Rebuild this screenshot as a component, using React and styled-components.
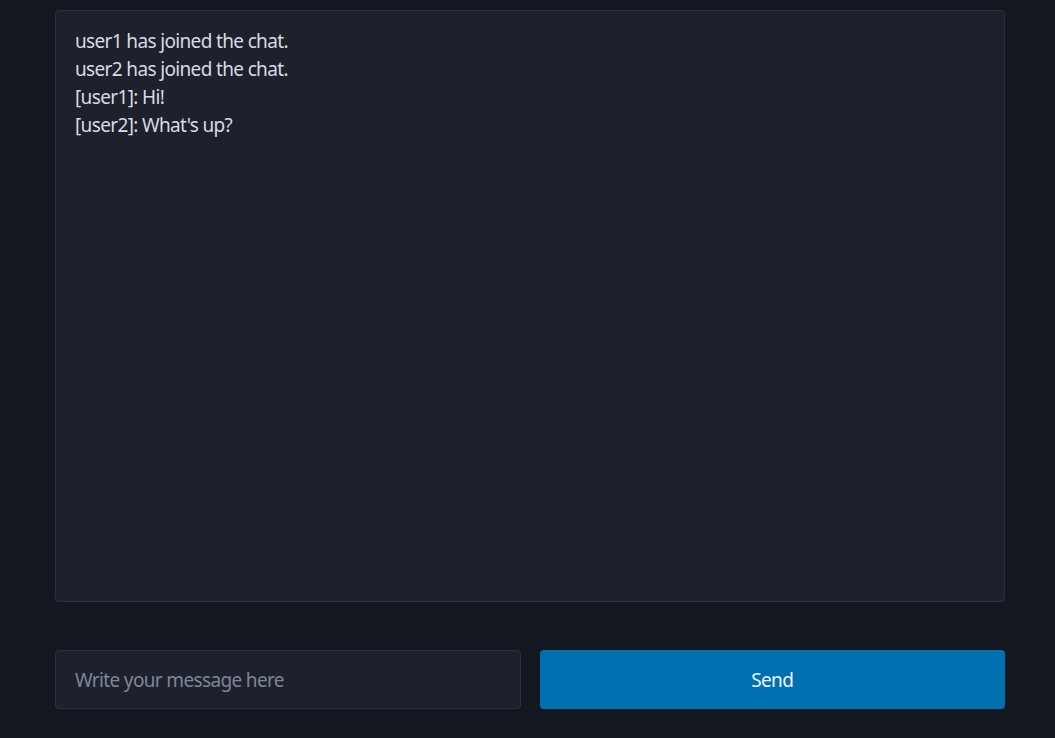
import React from "react";
import styled, { createGlobalStyle } from "styled-components";

const Global = createGlobalStyle`
  html, body { margin: 0; padding: 0; background: #13171f; }
  body { font-family: "Noto Sans", "Open Sans", sans-serif; }
  * { box-sizing: border-box; }
`;

const Page = styled.div`
  min-height: 738px;
  padding: 10px 50px 0 55px;
  display: flex;
  flex-direction: column;
`;

const ChatLog = styled.div`
  height: 592px;
  background: #1e212b;
  border: 1px solid #2b303b;
  border-radius: 4px;
  padding: 16px 19px;
  color: #d6dbe3;
  font-size: 19px;
  letter-spacing: -0.65px;
  line-height: 28px;
`;

const Line = styled.div``;

const Form = styled.form`
  margin-top: 48px;
  display: grid;
  grid-template-columns: 1fr 1fr;
  gap: 19px;
`;

const Input = styled.input`
  height: 59px;
  background: #1e212b;
  border: 1px solid #2b303b;
  border-radius: 4px;
  padding: 0 19px;
  color: #d6dbe3;
  font-family: inherit;
  font-size: 19px;
  letter-spacing: -0.65px;
  outline: none;
  &::placeholder { color: #7b879b; }
`;

const SendButton = styled.button`
  height: 59px;
  background: #0170b0;
  border: none;
  border-radius: 4px;
  color: #eef4fa;
  font-family: inherit;
  font-size: 19px;
  letter-spacing: -0.65px;
  cursor: pointer;
`;

const messages = [
  "user1 has joined the chat.",
  "user2 has joined the chat.",
  "[user1]: Hi!",
  "[user2]: What's up?",
];

export default function App() {
  return (
    <>
      <Global />
      <Page>
        <ChatLog>
          {messages.map((m, i) => (
            <Line key={i}>{m}</Line>
          ))}
        </ChatLog>
        <Form onSubmit={(e) => e.preventDefault()}>
          <Input placeholder="Write your message here" />
          <SendButton type="submit">Send</SendButton>
        </Form>
      </Page>
    </>
  );
}
